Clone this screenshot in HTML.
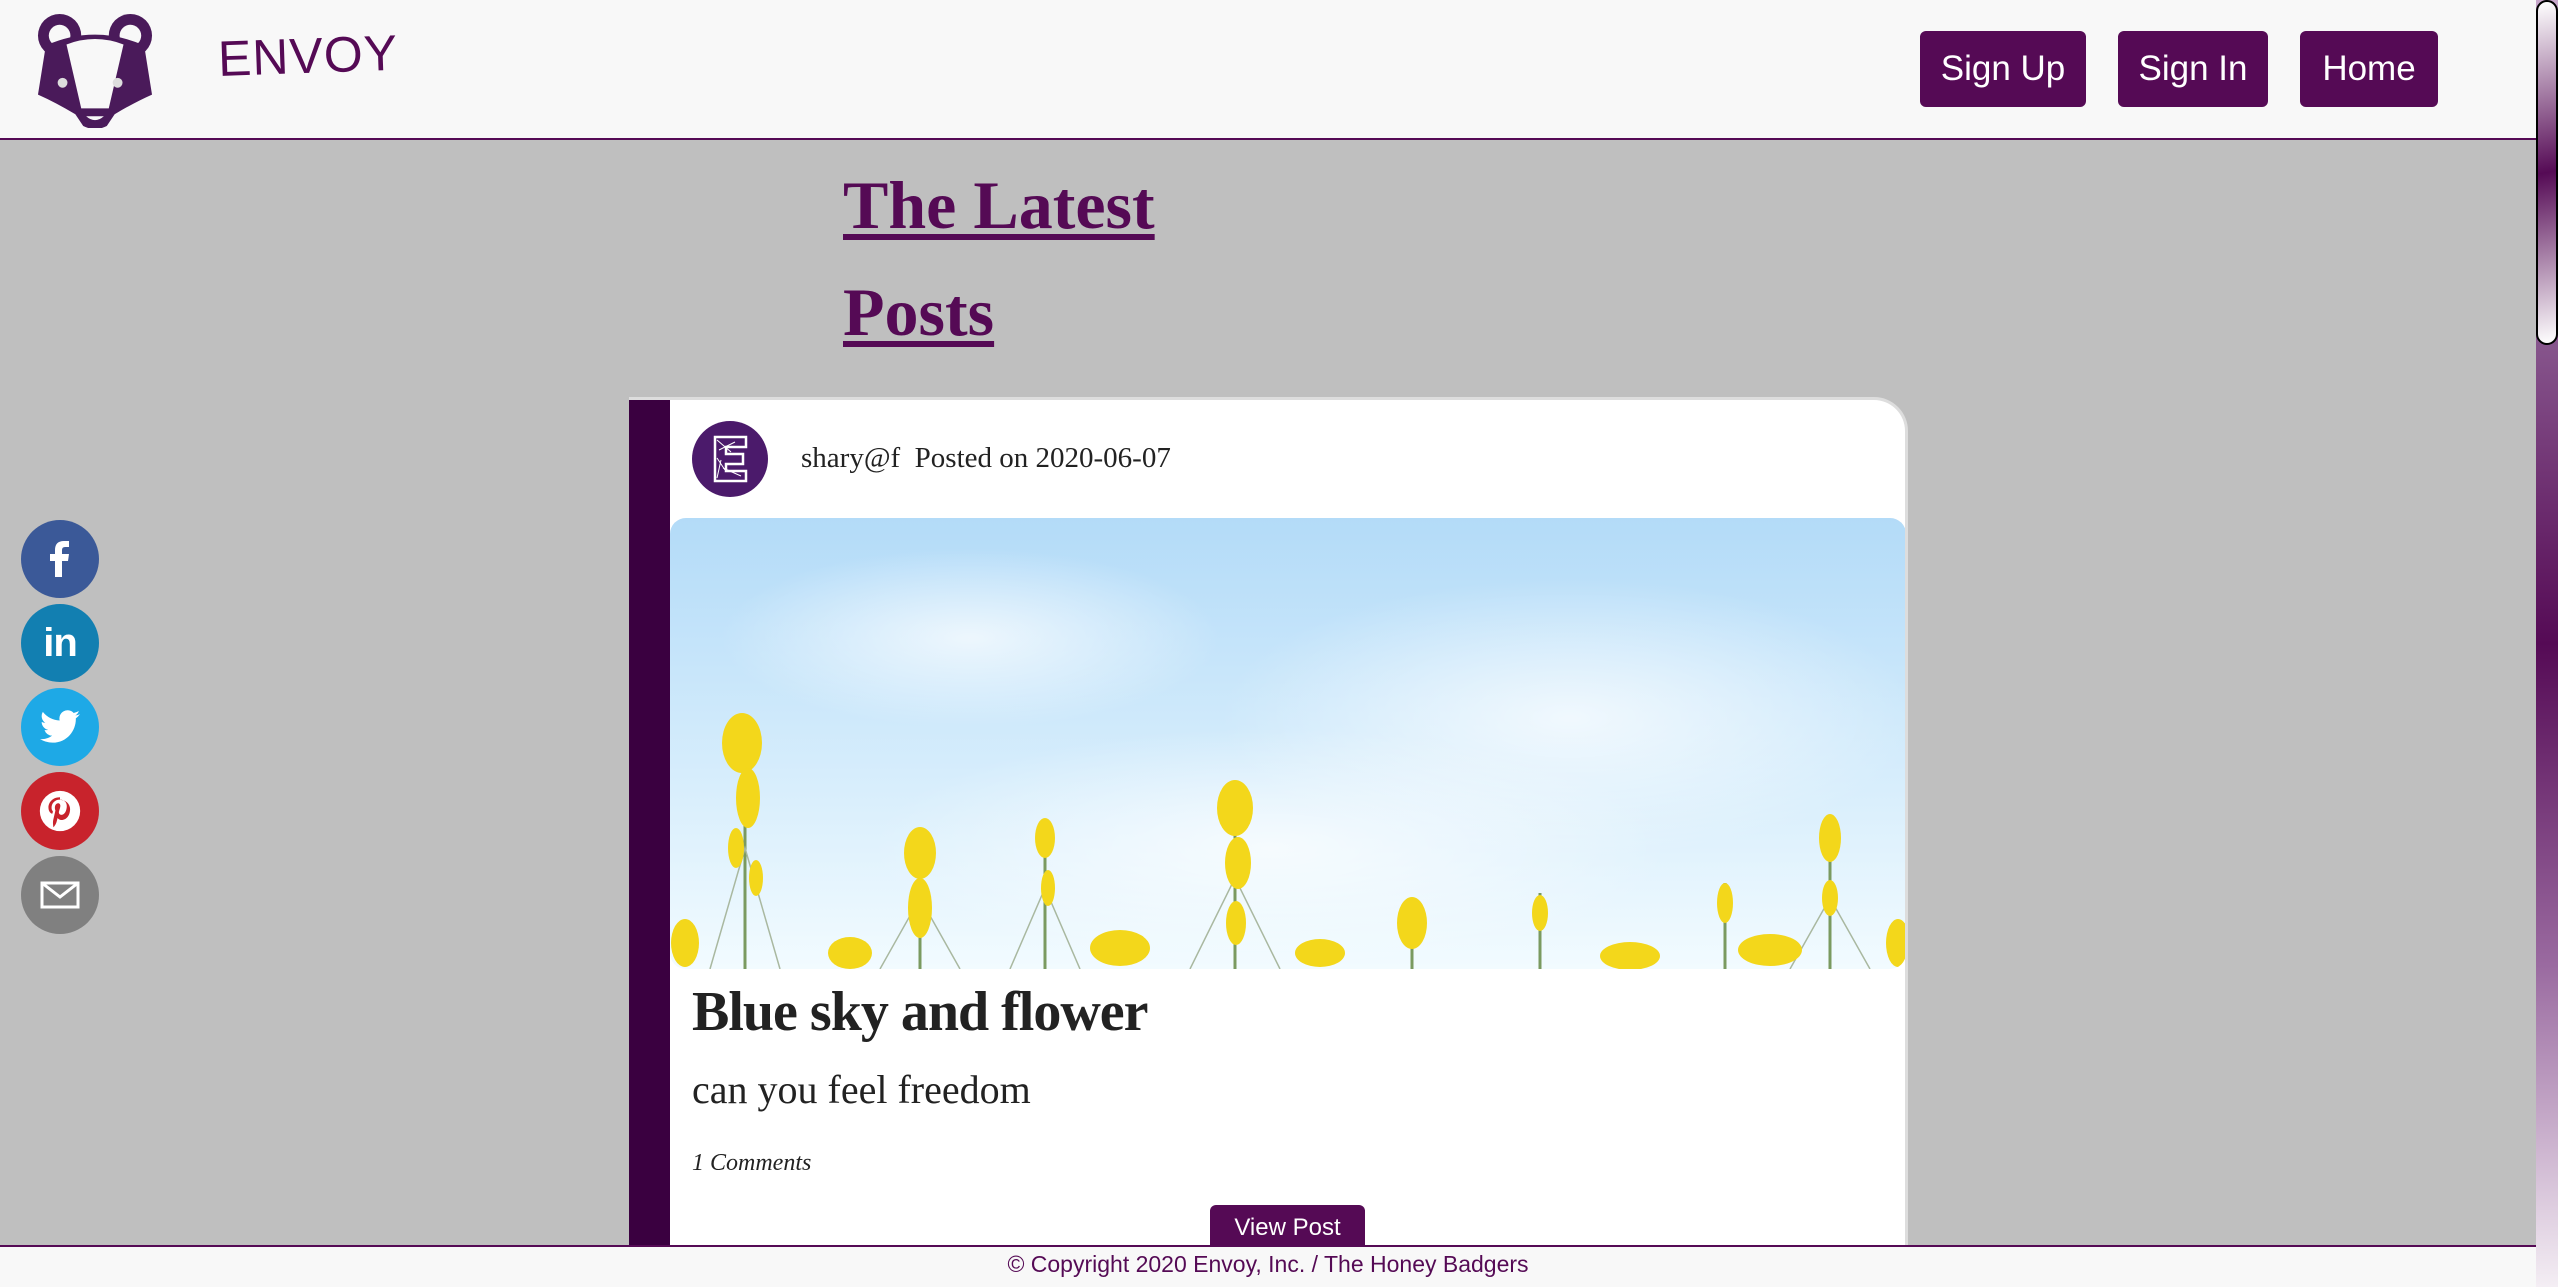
<!DOCTYPE html>
<html><head><meta charset="utf-8">
<style>
*{margin:0;padding:0;box-sizing:border-box}
html,body{width:2558px;height:1287px;overflow:hidden}
body{background:#bfbfbf;position:relative;font-family:"Liberation Sans",sans-serif}
.hdr{position:absolute;left:0;top:0;width:2536px;height:140px;background:#f8f8f8;border-bottom:2px solid #550a55}
.btn{position:absolute;top:31px;height:76px;background:#550a55;color:#fff;border-radius:6px;font-size:35px;display:flex;align-items:center;justify-content:center}
.envoy{position:absolute;left:218px;top:30px;font-size:50px;color:#550a55;font-family:"Liberation Sans",sans-serif;letter-spacing:1px;transform:rotate(-2deg);transform-origin:left}
.title{position:absolute;left:843px;font-family:"Liberation Serif",serif;font-weight:bold;font-size:68px;color:#550a55;text-decoration:underline;text-decoration-thickness:6px;text-underline-offset:6px}
.card{position:absolute;left:629px;top:397px;width:1279px;height:860px;background:#fff;border-top-right-radius:34px;border-right:3px solid #ddd;border-top:3px solid #ddd;overflow:hidden}
.bar{position:absolute;left:0;top:-3px;width:41px;height:870px;background:#3a0040}
.in{position:absolute;left:41px;top:0;right:0;bottom:0}
.soc{position:absolute;left:21px;width:78px;height:78px;border-radius:50%;display:flex;align-items:center;justify-content:center}
.sb{position:absolute;left:2536px;top:0;width:22px;height:1287px;background:linear-gradient(to bottom,#c8a8cc 0%,#8a5a90 25%,#550a55 50%,#9a6aa0 75%,#f4eef4 100%)}
.thumb{position:absolute;left:2536px;top:0;width:22px;height:345px;border:2px solid #000;border-radius:11px;background:linear-gradient(170deg,#fff 0%,#550a55 50%,#fff 100%)}
.ftr{position:absolute;left:0;top:1245px;width:2536px;height:42px;background:#f8f8f8;border-top:2px solid #550a55;text-align:center;color:#550a55;font-size:23px;line-height:34px}
.serif{font-family:"Liberation Serif",serif}
</style></head><body>
<div class="hdr">
<svg style="position:absolute;left:36px;top:12px" width="118" height="116" viewBox="0 0 120 118">
<circle cx="24" cy="24" r="22" fill="#4a1a5a"/><circle cx="24" cy="24" r="11" fill="#f8f8f8"/>
<circle cx="96" cy="24" r="22" fill="#4a1a5a"/><circle cx="96" cy="24" r="11" fill="#f8f8f8"/>
<path d="M10 34 Q60 12 110 34 L118 84 Q100 92 80 104 L72 116 Q60 122 48 116 L40 104 Q20 92 2 84 Z" fill="#4a1a5a"/>
<path d="M31 33 Q60 22 89 33 L74 98 L46 98 Z" fill="#f8f8f8"/>
<circle cx="27" cy="72" r="5" fill="#ddd"/><circle cx="83" cy="72" r="5" fill="#ddd"/>
<path d="M51 106 L69 106 Q60 114 51 106Z" fill="#f8f8f8"/>
</svg>
<div class="envoy">ENVOY</div>
<div class="btn" style="left:1920px;width:166px">Sign Up</div>
<div class="btn" style="left:2118px;width:150px">Sign In</div>
<div class="btn" style="left:2300px;width:138px">Home</div>
</div>
<div class="title" style="top:166px">The Latest</div>
<div class="title" style="top:273px">Posts</div>

<div class="card"><div class="bar"></div><div class="in">
<svg style="position:absolute;left:21px;top:20px" width="78" height="78" viewBox="0 0 78 78">
<circle cx="39" cy="39" r="38" fill="#4b1a6b"/>
<path d="M24 17 H55 V27 H35 V34 H52 V44 H35 V51 H55 V61 H24 Z" fill="none" stroke="#fff" stroke-width="2.5"/>
<path d="M26 20 L40 32 M30 40 L26 58 M28 30 L44 22 M32 48 L50 56 M26 38 L34 50" stroke="#fff" stroke-width="1"/>
</svg>
<div class="serif" style="position:absolute;left:131px;top:42px;font-size:29px;color:#222">shary@f&nbsp; Posted on 2020-06-07</div>
<svg style="position:absolute;left:0;top:118px;border-radius:16px" width="1236" height="451" viewBox="0 0 1236 451">
<defs>
<linearGradient id="sky" x1="0" y1="0" x2="0" y2="1"><stop offset="0" stop-color="#b3dbf8"/><stop offset="0.6" stop-color="#d8eefc"/><stop offset="1" stop-color="#f2fbff"/></linearGradient>
<radialGradient id="cl"><stop offset="0" stop-color="#fff" stop-opacity="0.7"/><stop offset="1" stop-color="#fff" stop-opacity="0"/></radialGradient>
</defs>
<rect width="1236" height="451" fill="url(#sky)"/>
<ellipse cx="900" cy="200" rx="350" ry="140" fill="url(#cl)"/>
<ellipse cx="300" cy="120" rx="250" ry="90" fill="url(#cl)"/>
<ellipse cx="600" cy="330" rx="400" ry="120" fill="url(#cl)"/>
<g stroke="#7a9a60" stroke-width="3" fill="none">
<path d="M75 200 V451"/><path d="M250 310 V451"/><path d="M375 305 V451"/><path d="M565 270 V451"/><path d="M742 380 V451"/><path d="M870 375 V451"/><path d="M1055 365 V451"/><path d="M1160 300 V451"/>
<path d="M40 451 L75 330 L110 451 M520 451 L565 360 L610 451 M1120 451 L1160 380 L1200 451 M210 451 L250 380 L290 451 M340 451 L375 370 L410 451" stroke="#a9b8a0" stroke-width="1.5"/>
</g>
<g fill="#f3d71b">
<ellipse cx="72" cy="225" rx="20" ry="30"/><ellipse cx="78" cy="280" rx="12" ry="30"/><ellipse cx="66" cy="330" rx="8" ry="20"/><ellipse cx="86" cy="360" rx="7" ry="18"/>
<ellipse cx="250" cy="335" rx="16" ry="26"/><ellipse cx="250" cy="390" rx="12" ry="30"/>
<ellipse cx="375" cy="320" rx="10" ry="20"/><ellipse cx="378" cy="370" rx="7" ry="18"/>
<ellipse cx="565" cy="290" rx="18" ry="28"/><ellipse cx="568" cy="345" rx="13" ry="26"/><ellipse cx="566" cy="405" rx="10" ry="22"/>
<ellipse cx="742" cy="405" rx="15" ry="26"/><ellipse cx="870" cy="395" rx="8" ry="18"/>
<ellipse cx="1055" cy="385" rx="8" ry="20"/><ellipse cx="1160" cy="320" rx="11" ry="24"/><ellipse cx="1160" cy="380" rx="8" ry="18"/>
<ellipse cx="180" cy="435" rx="22" ry="16"/><ellipse cx="450" cy="430" rx="30" ry="18"/><ellipse cx="650" cy="435" rx="25" ry="14"/><ellipse cx="960" cy="438" rx="30" ry="14"/><ellipse cx="1100" cy="432" rx="32" ry="16"/><ellipse cx="15" cy="425" rx="14" ry="24"/><ellipse cx="1228" cy="425" rx="12" ry="24"/>
</g>
</svg>
<div class="serif" style="position:absolute;left:22px;top:580px;font-size:56px;font-weight:bold;color:#222;letter-spacing:-1px">Blue sky and flower</div>
<div class="serif" style="position:absolute;left:22px;top:666px;font-size:40px;color:#222">can you feel freedom</div>
<div class="serif" style="position:absolute;left:22px;top:750px;font-size:24px;font-style:italic;color:#222">1 Comments</div>
<div style="position:absolute;left:540px;top:805px;width:155px;height:50px;background:#550a55;color:#fff;border-radius:6px 6px 0 0;font-size:24px;text-align:center;line-height:46px">View Post</div>
</div></div>

<div class="soc" style="top:520px;background:#3b5998"><svg width="40" height="40" viewBox="0 0 40 40"><path d="M22 38 V22 H28 L29 15 H22 V11 Q22 8 25 8 H29 V2 H24 Q15 2 15 11 V15 H10 V22 H15 V38Z" fill="#fff"/></svg></div>
<div class="soc" style="top:604px;background:#127fb1"><span style="color:#fff;font-weight:bold;font-size:40px;letter-spacing:-1px">in</span></div>
<div class="soc" style="top:688px;background:#1ea9e6"><svg width="40" height="34" viewBox="0 0 24 20"><path d="M24 2.3a10 10 0 0 1-2.8.8 5 5 0 0 0 2.1-2.7 10 10 0 0 1-3.1 1.2 4.9 4.9 0 0 0-8.4 4.5A14 14 0 0 1 1.7.9a4.9 4.9 0 0 0 1.5 6.6 4.9 4.9 0 0 1-2.2-.6 4.9 4.9 0 0 0 3.9 4.8 5 5 0 0 1-2.2.1 4.9 4.9 0 0 0 4.6 3.4A9.9 9.9 0 0 1 0 17.2 14 14 0 0 0 7.5 19.4c9 0 14-7.5 14-14v-.6A10 10 0 0 0 24 2.3z" fill="#fff"/></svg></div>
<div class="soc" style="top:772px;background:#c8232c"><svg width="44" height="44" viewBox="0 0 24 24"><circle cx="12" cy="12" r="11" fill="#fff"/><path d="M12 4.5c-4.2 0-6.3 3-6.3 5.5 0 1.5.6 2.9 1.8 3.4.2.1.4 0 .4-.2l.2-.7c.1-.2 0-.3-.1-.5-.4-.4-.6-1-.6-1.8 0-2.3 1.7-4.4 4.5-4.4 2.5 0 3.8 1.5 3.8 3.5 0 2.6-1.2 4.8-2.9 4.8-.9 0-1.6-.8-1.4-1.7.3-1.1.8-2.4.8-3.2 0-.7-.4-1.4-1.2-1.4-1 0-1.8 1-1.8 2.4 0 .9.3 1.5.3 1.5l-1.2 5.2c-.3 1.4 0 3.2.1 3.8 0 .1.2.1.2.1.1-.1 1.1-1.4 1.5-2.7l.6-2.3c.3.6 1.2 1.1 2.1 1.1 2.8 0 4.7-2.6 4.7-6 0-2.6-2.2-5-5.5-5z" fill="#c8232c"/></svg></div>
<div class="soc" style="top:856px;background:#808080"><svg width="40" height="28" viewBox="0 0 40 28"><rect x="2" y="2" width="36" height="24" fill="none" stroke="#fff" stroke-width="3"/><path d="M2 2 L20 16 L38 2" fill="none" stroke="#fff" stroke-width="3"/></svg></div>

<div class="ftr">© Copyright 2020 Envoy, Inc. / The Honey Badgers</div>
<div class="sb"></div><div class="thumb"></div>
</body></html>
